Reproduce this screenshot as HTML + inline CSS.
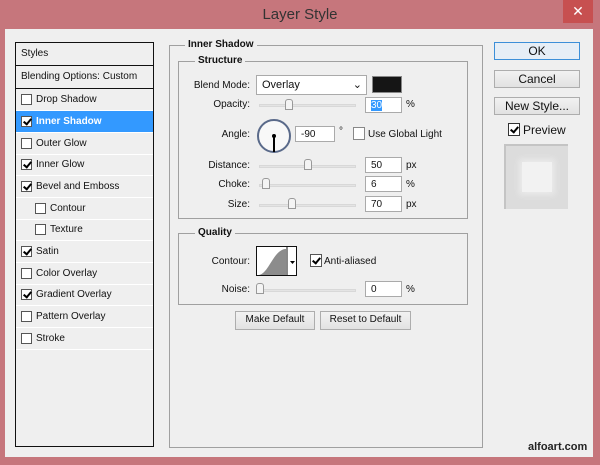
<!DOCTYPE html><html><head><style>
*{margin:0;padding:0;box-sizing:border-box}
body{width:600px;height:465px;background:#c6767c;position:relative;overflow:hidden;font-family:"Liberation Sans",sans-serif;font-size:10px;color:#111}
.a{position:absolute}
.dlg{left:5px;top:29px;width:588px;height:428px;background:#efefef}
.lp{left:15px;top:42px;width:139px;height:405px;border:1px solid #111;background:#efefef}
.row{position:absolute;left:0;width:137px;height:22px;border-bottom:1px solid #fff;line-height:21px;padding-left:20px}
.cb{position:absolute;width:11px;height:11px;border:1px solid #555;background:#fff;top:5px;left:5px}
.cb.on:after{content:"";position:absolute;left:3px;top:0px;width:3px;height:6px;border:solid #000;border-width:0 2px 2px 0;transform:rotate(40deg)}
.grp{border:1px solid #a0a0a0}
.lab{position:absolute;font-weight:bold;background:#efefef;padding:0 3px}
.r{text-align:right;width:80px}
.sl{position:absolute;height:3px;background:#e4e4e4;border:1px solid #d8d8d8}
.th{position:absolute;width:8px;height:11px;border:1px solid #999;background:#f4f4f4;border-radius:3px 3px 0 0}
.in{position:absolute;background:#fff;border:1px solid #aaa;height:16px;line-height:16px;padding-left:5px}
.btn{position:absolute;border:1px solid #adadad;background:linear-gradient(#f2f2f2,#e2e2e2);text-align:center;font-size:12px;line-height:16px}
</style></head><body>
<div class="a" style="left:0;top:0;width:600px;text-align:center;top:6px;font-size:15px;color:#333">Layer Style</div>
<div class="a" style="left:563px;top:0;width:30px;height:23px;background:#c75050;color:#fff;text-align:center;font-size:14px;line-height:22px">✕</div>
<div class="a dlg"></div>
<div class="a lp">
<div class="row" style="top:0;padding-left:5px;height:23px;border-bottom:1px solid #111">Styles</div>
<div class="row" style="top:23px;padding-left:5px;height:23px;border-bottom:1px solid #111">Blending Options: Custom</div>
<div class="row" style="top:46px"><span class="cb"></span>Drop Shadow</div>
<div class="row" style="top:68px;background:#3399ff;color:#fff;font-weight:bold"><span class="cb on"></span>Inner Shadow</div>
<div class="row" style="top:90px"><span class="cb"></span>Outer Glow</div>
<div class="row" style="top:111px"><span class="cb on"></span>Inner Glow</div>
<div class="row" style="top:133px"><span class="cb on"></span>Bevel and Emboss</div>
<div class="row" style="top:155px;padding-left:34px"><span class="cb" style="left:19px"></span>Contour</div>
<div class="row" style="top:176px;padding-left:34px"><span class="cb" style="left:19px"></span>Texture</div>
<div class="row" style="top:198px"><span class="cb on"></span>Satin</div>
<div class="row" style="top:220px"><span class="cb"></span>Color Overlay</div>
<div class="row" style="top:241px"><span class="cb on"></span>Gradient Overlay</div>
<div class="row" style="top:263px"><span class="cb"></span>Pattern Overlay</div>
<div class="row" style="top:285px"><span class="cb"></span>Stroke</div>
</div>
<div class="a grp" style="left:169px;top:45px;width:314px;height:403px"></div>
<div class="lab" style="left:185px;top:39px">Inner Shadow</div>
<div class="a grp" style="left:178px;top:61px;width:290px;height:158px"></div>
<div class="lab" style="left:195px;top:55px">Structure</div>
<div class="a r" style="left:170px;top:80px">Blend Mode:</div>
<div class="a" style="left:256px;top:75px;width:111px;height:20px;background:#fff;border:1px solid #aaa;padding:3px 5px;font-size:11px">Overlay<span style="position:absolute;right:4px;top:2px">⌄</span></div>
<div class="a" style="left:372px;top:76px;width:30px;height:17px;background:#151515;border:1px solid #888"></div>
<div class="a r" style="left:170px;top:99px">Opacity:</div>
<div class="sl" style="left:259px;top:104px;width:97px"></div><div class="th" style="left:285px;top:99px"></div>
<div class="in" style="left:365px;top:97px;width:37px"><span style="background:#3399ff;color:#fff">30</span></div><div class="a" style="left:406px;top:99px">%</div>
<div class="a r" style="left:170px;top:129px">Angle:</div>
<div class="a" style="left:257px;top:119px;width:34px;height:34px;border-radius:50%;border:2px solid #5a6a8a;background:#f8f8f8"></div>
<div class="a" style="left:272px;top:134px;width:4px;height:4px;background:#000;border-radius:50%"></div>
<div class="a" style="left:273px;top:136px;width:1.5px;height:16px;background:#000"></div>
<div class="in" style="left:295px;top:126px;width:40px">-90</div><div class="a" style="left:339px;top:126px">°</div>
<div class="a" style="left:353px;top:127px;width:12px;height:13px;border:1px solid #888;background:#fff"></div>
<div class="a" style="left:368px;top:129px">Use Global Light</div>
<div class="a r" style="left:170px;top:160px">Distance:</div>
<div class="sl" style="left:259px;top:165px;width:97px"></div><div class="th" style="left:304px;top:159px"></div>
<div class="in" style="left:365px;top:157px;width:37px">50</div><div class="a" style="left:406px;top:160px">px</div>
<div class="a r" style="left:170px;top:179px">Choke:</div>
<div class="sl" style="left:259px;top:184px;width:97px"></div><div class="th" style="left:262px;top:178px"></div>
<div class="in" style="left:365px;top:176px;width:37px">6</div><div class="a" style="left:406px;top:179px">%</div>
<div class="a r" style="left:170px;top:199px">Size:</div>
<div class="sl" style="left:259px;top:204px;width:97px"></div><div class="th" style="left:288px;top:198px"></div>
<div class="in" style="left:365px;top:196px;width:37px">70</div><div class="a" style="left:406px;top:199px">px</div>
<div class="a grp" style="left:178px;top:233px;width:290px;height:72px"></div>
<div class="lab" style="left:195px;top:227px">Quality</div>
<div class="a r" style="left:170px;top:256px">Contour:</div>
<div class="a" style="left:256px;top:246px;width:41px;height:30px;border:1px solid #111;background:#fff;overflow:hidden">
<svg width="41" height="30" style="position:absolute;left:0;top:0"><path d="M2 28 C12 26 16 4 28 2 L29 2 L29 28Z" fill="#8c8c8c"/><line x1="30" y1="0" x2="30" y2="30" stroke="#111"/><path d="M33 14 h5 l-2.5 3z" fill="#000"/></svg></div>
<div class="a" style="left:310px;top:254px;width:12px;height:13px;border:1px solid #555;background:#fff"><span class="cb on" style="border:none;background:none;top:1px;left:0"></span></div>
<div class="a" style="left:324px;top:256px">Anti-aliased</div>
<div class="a r" style="left:170px;top:284px">Noise:</div>
<div class="sl" style="left:259px;top:289px;width:97px"></div><div class="th" style="left:256px;top:283px"></div>
<div class="in" style="left:365px;top:281px;width:37px">0</div><div class="a" style="left:406px;top:284px">%</div>
<div class="btn" style="left:235px;top:311px;width:80px;height:19px;font-size:10px">Make Default</div>
<div class="btn" style="left:320px;top:311px;width:91px;height:19px;font-size:10px">Reset to Default</div>
<div class="btn" style="left:494px;top:42px;width:86px;height:18px;border-color:#3c8fd8;background:#e6eef6">OK</div>
<div class="btn" style="left:494px;top:70px;width:86px;height:18px">Cancel</div>
<div class="btn" style="left:494px;top:97px;width:86px;height:18px">New Style...</div>
<div class="a" style="left:508px;top:123px;width:12px;height:13px;border:1px solid #333;background:#fff"><span class="cb on" style="border:none;background:none;top:1px;left:0"></span></div>
<div class="a" style="left:523px;top:123px;font-size:12px">Preview</div>
<div class="a" style="left:504px;top:144px;width:64px;height:65px;background:#dcdcdc;border-top:2px solid #c4c4c4;border-left:2px solid #c4c4c4"></div>
<div class="a" style="left:522px;top:162px;width:30px;height:30px;background:#f2f2f2;box-shadow:0 0 6px 3px #eaeaea"></div>
<div class="a" style="left:528px;top:441px;font-size:11px;font-weight:bold;color:#222">alfoart.com</div>
</body></html>
